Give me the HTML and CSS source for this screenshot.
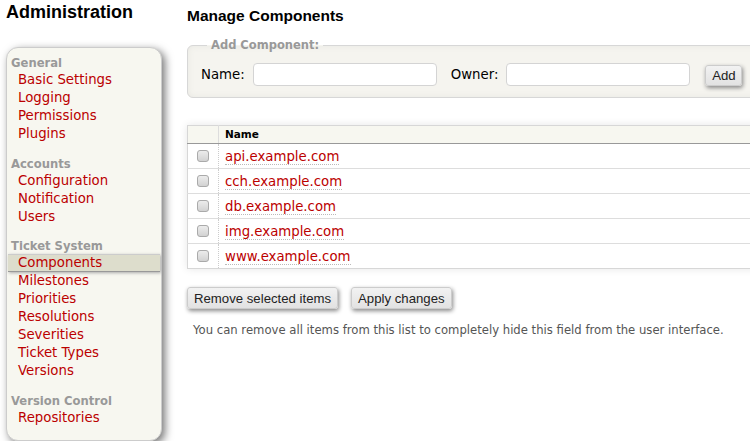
FILE: index.html
```html
<!DOCTYPE html>
<html>
<head>
<meta charset="utf-8">
<title>Manage Components</title>
<link rel="stylesheet" href="styles.css">
</head>
<body>
<div class="page">
  <div class="side">
    <h1 class="title">Administration</h1>
    <nav class="tabs">
      <div class="group">
        <div class="ghead">General</div>
        <a class="item" href="#">Basic Settings</a>
        <a class="item" href="#">Logging</a>
        <a class="item" href="#">Permissions</a>
        <a class="item" href="#">Plugins</a>
      </div>
      <div class="group">
        <div class="ghead">Accounts</div>
        <a class="item" href="#">Configuration</a>
        <a class="item" href="#">Notification</a>
        <a class="item" href="#">Users</a>
      </div>
      <div class="group">
        <div class="ghead">Ticket System</div>
        <a class="item active" href="#">Components</a>
        <a class="item" href="#">Milestones</a>
        <a class="item" href="#">Priorities</a>
        <a class="item" href="#">Resolutions</a>
        <a class="item" href="#">Severities</a>
        <a class="item" href="#">Ticket Types</a>
        <a class="item" href="#">Versions</a>
      </div>
      <div class="group">
        <div class="ghead">Version Control</div>
        <a class="item" href="#">Repositories</a>
      </div>
    </nav>
  </div>
  <div class="main">
    <h2 class="heading">Manage Components</h2>
    <fieldset class="addform">
      <legend>Add Component:</legend>
      <div class="fields">
        <label class="lbl">Name:</label>
        <input class="txt" type="text">
        <label class="lbl owner">Owner:</label>
        <input class="txt" type="text">
        <button class="btn add" type="button">Add</button>
      </div>
    </fieldset>
    <table class="listing">
      <thead>
        <tr><th class="sel"></th><th class="name">Name</th></tr>
      </thead>
      <tbody>
        <tr><td class="sel"><input class="cb" type="checkbox"></td><td class="name"><a href="#">api.example.com</a></td></tr>
        <tr><td class="sel"><input class="cb" type="checkbox"></td><td class="name"><a href="#">cch.example.com</a></td></tr>
        <tr><td class="sel"><input class="cb" type="checkbox"></td><td class="name"><a href="#">db.example.com</a></td></tr>
        <tr><td class="sel"><input class="cb" type="checkbox"></td><td class="name"><a href="#">img.example.com</a></td></tr>
        <tr><td class="sel"><input class="cb" type="checkbox"></td><td class="name"><a href="#">www.example.com</a></td></tr>
      </tbody>
    </table>
    <div class="buttons">
      <button class="btn" type="button">Remove selected items</button>
      <button class="btn" type="button">Apply changes</button>
    </div>
    <p class="help">You can remove all items from this list to completely hide this field from the user interface.</p>
  </div>
</div>
</body>
</html>
```
FILE: styles.css
```css
html, body {
  overflow: hidden;
}
body {
  margin: 0;
  background: #fff;
  color: #000;
  font-family: "DejaVu Sans", Verdana, sans-serif;
  font-size: 13.3px;
}
.page {
  display: flex;
  align-items: flex-start;
  padding-left: 6px;
}
.side {
  flex: none;
  width: 156px;
}
.title {
  margin: 0;
  padding-top: 1px;
  font: bold 18px/22px "Liberation Sans", Arial, sans-serif;
  color: #000;
}
.tabs {
  margin-top: 24px;
  padding-top: 7px;
  background: #f7f7f0;
  border: 1px solid #ccc;
  border-radius: 12px;
  box-shadow: 3px 3px 8px 0 #777;
}
.group {
  margin-bottom: 12.7px;
}
.ghead {
  padding-left: 4px;
  font-size: 11.6px;
  font-weight: bold;
  line-height: 16px;
  color: #999;
}
.item {
  display: block;
  padding-left: 11px;
  line-height: 18px;
  color: #b00;
  text-decoration: none;
}
.item.active {
  margin: 0 1px;
  padding-left: 10px;
  line-height: 16px;
  background: #ddc;
  border-top: 1px solid #ccc;
  border-bottom: 1px solid #999;
  box-shadow: 1px 1px 3px 0 #aaa;
}
.main {
  flex: none;
  width: 620px;
  margin-left: 25px;
}
.heading {
  margin: 6px 0 0;
  font: bold 15.5px/20px "Liberation Sans", Arial, sans-serif;
  color: #000;
}
.addform {
  margin: 12px 0 0;
  padding: 11px 13px 11px;
  background: #f5f4ef;
  border: 1px solid #d7d7d7;
  border-radius: 6px;
  box-shadow: inset 0 0 6px 0 #e8e8e2;
}
.addform legend {
  margin-left: 6px;
  padding: 0 4px;
  font-size: 11.5px;
  font-weight: bold;
  line-height: 14px;
  color: #999;
}
.fields {
  display: flex;
  align-items: center;
}
.lbl {
  margin-right: 8px;
}
.lbl.owner {
  margin-left: 14px;
}
.txt {
  box-sizing: border-box;
  width: 184px;
  height: 23px;
  margin: 0;
  padding: 2px 4px;
  background: #fff;
  border: 1px solid #d4d4d4;
  border-radius: 4px;
  font: inherit;
}
.btn {
  box-sizing: border-box;
  height: 22px;
  margin: 0;
  padding: 0 6px;
  background: linear-gradient(#f2f2f2, #e2e2e2);
  border: 1px solid #ccc;
  border-radius: 3px;
  box-shadow: 1px 2px 4px 0 #888;
  font: 13.2px "Liberation Sans", Arial, sans-serif;
  color: #222;
}
.btn.add {
  width: 37px;
  height: 21px;
  margin-left: 15px;
  margin-top: 2px;
  padding: 0;
}
.listing {
  margin-top: 27px;
  width: 600px;
  border-collapse: collapse;
  border: 1px solid #d7d7d7;
  box-shadow: 0 0 8px 0 #e6e6e6;
}
.listing th {
  height: 17px;
  padding: 0 6px;
  background: #f7f7f0;
  border-bottom: 1px solid #999;
  font-size: 10.5px;
  font-weight: bold;
  line-height: 17px;
  text-align: left;
}
.listing th.sel {
  width: 30px;
  padding: 0;
  border-right: 1px solid #ddd;
}
.listing td {
  height: 24px;
  padding: 0 6px;
  border-top: 1px solid #ddd;
}
.listing td.sel {
  width: 30px;
  padding: 0;
  border-right: 1px dotted #ccc;
}
.listing tbody tr:first-child td {
  border-top: none;
}
.cb {
  -webkit-appearance: none;
  appearance: none;
  display: block;
  box-sizing: border-box;
  width: 12px;
  height: 12px;
  margin: 0 auto;
  background: linear-gradient(#ececec, #d2d2d2);
  border: 1px solid #aaa;
  border-radius: 3px;
}
.listing a {
  color: #b00;
  text-decoration: none;
  border-bottom: 1px dotted #bbb;
}
.buttons {
  display: flex;
  gap: 13px;
  margin-top: 18px;
}
.help {
  margin: 14px 0 0 6px;
  font-size: 11.65px;
  color: #555;
}
```
